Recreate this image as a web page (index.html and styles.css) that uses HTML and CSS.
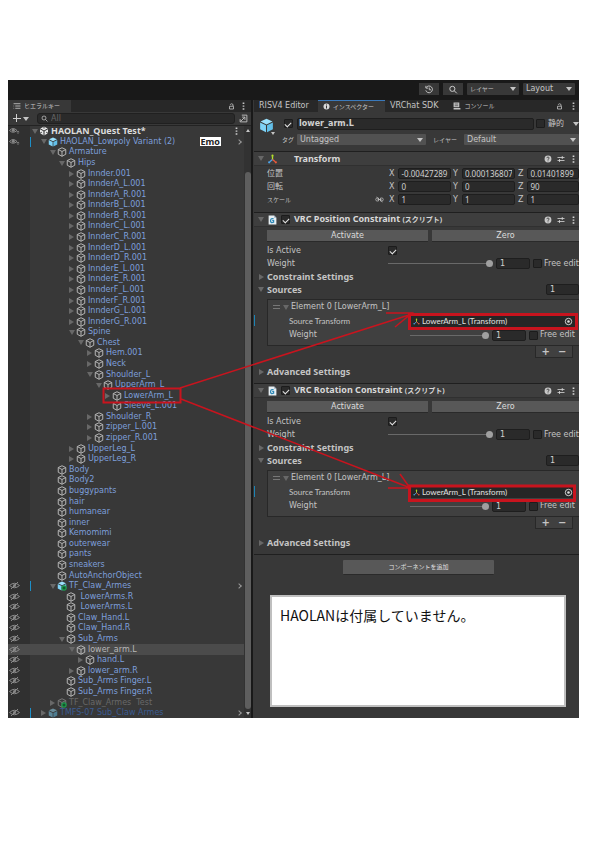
FILE: index.html
```html
<!DOCTYPE html>
<html lang="ja">
<head>
<meta charset="utf-8">
<title>HAOLAN_Quest Test</title>
<link rel="stylesheet" href="styles.css">
</head>
<body>
<svg class="defs" aria-hidden="true">
  <symbol id="cube" viewBox="0 0 20 20"><path d="M10 1.500 17.500 5v9.500L10 18.500 2.500 14.500V5ZM2.500 5 10 9l7.500-4M10 9v9.500" fill="none" stroke="currentColor" stroke-width="2" stroke-linejoin="round"/></symbol>
  <symbol id="prefab" viewBox="0 0 20 20"><path d="M10 1 18 4.500 10 8.500 2 4.500Z" fill="#9be0fb"/><path d="M1.500 6 9.300 9.800V19L1.500 15Z" fill="#7fd3f7"/><path d="M18.500 6 10.700 9.800V19l7.800-4Z" fill="#62bfe8"/></symbol>
  <symbol id="plus-badge" viewBox="0 0 10 10"><circle cx="5" cy="5" r="4.500" fill="#1e9a4c"/><path d="M5 2.500v5M2.500 5h5" stroke="#0e3d20" stroke-width="1.500"/></symbol>
  <symbol id="unity" viewBox="0 0 20 20"><path d="M10 1 18 5.500v9L10 19l-8-4.500v-9Z" fill="#e8e8e8"/><path d="M10 10V19M10 10 2 5.500M10 10l8-4.500" stroke="#333" stroke-width="2"/><path d="M10 1v4M2 14.500 5.500 12.500M18 14.500 14.500 12.500" stroke="#333" stroke-width="2"/></symbol>
  <symbol id="eye" viewBox="0 0 22 16"><path d="M1 8Q8 0 16 8 8 15 1 8Z" fill="none" stroke="currentColor" stroke-width="2"/><circle cx="8.500" cy="7.500" r="3" fill="currentColor"/><path d="M18 9v6M15.500 11l2.500-2 2.500 2" fill="none" stroke="currentColor" stroke-width="1.500"/></symbol>
  <symbol id="eye-off" viewBox="0 0 22 16"><path d="M1 8Q11-1 21 8 11 17 1 8Z" fill="none" stroke="currentColor" stroke-width="2"/><circle cx="11" cy="8" r="3" fill="currentColor"/><path d="M4 15 18 1" stroke="currentColor" stroke-width="2"/></symbol>
  <symbol id="lock" viewBox="0 0 12 14"><path d="M2 6.500h8V12H2ZM3.500 3.500Q4 1.500 6 1.500 9 1.500 9 4v2" fill="none" stroke="currentColor" stroke-width="1.600"/></symbol>
  <symbol id="kebab" viewBox="0 0 4 14"><path d="M.5 1h3v2.500h-3ZM.5 6h3v2.500h-3ZM.5 11h3v2.500h-3Z" fill="currentColor"/></symbol>
  <symbol id="search" viewBox="0 0 14 14"><circle cx="6" cy="6" r="4" fill="none" stroke="currentColor" stroke-width="1.500"/><path d="m9 9 4 4" stroke="currentColor" stroke-width="1.500"/></symbol>
  <symbol id="history" viewBox="0 0 16 16"><path d="M3 4.500A6 6 0 1 1 2.300 9.500M2.500 1.500v4h4M8.500 4.500V8.500H11.500" fill="none" stroke="currentColor" stroke-width="1.600"/></symbol>
  <symbol id="popout" viewBox="0 0 16 16"><path d="M5 2h9v12H2V9" fill="none" stroke="currentColor" stroke-width="1.600"/><path d="M3 13 10 6M5.500 5.500H10.500V10.500" fill="none" stroke="currentColor" stroke-width="1.600"/></symbol>
  <symbol id="list" viewBox="0 0 14 12"><path d="M1 2h12M4 6h9M4 10h9M1 6h1M1 10h1" stroke="currentColor" stroke-width="1.500"/></symbol>
  <symbol id="console" viewBox="0 0 14 14"><path d="M1 1h10v8H1Z M1 10.500h12V13H1Z" fill="currentColor"/><path d="M3 3.500h6M3 6.500h6" stroke="#282828"/></symbol>
  <symbol id="info" viewBox="0 0 14 14"><circle cx="7" cy="7" r="6" fill="#d8d8d8"/><path d="M7 3v2M7 6v5" stroke="#333" stroke-width="2"/></symbol>
  <symbol id="help" viewBox="0 0 14 14"><circle cx="7" cy="7" r="6" fill="#c8c8c8"/><path d="M5 5.500Q5 3.500 7 3.500T9 5.500Q9 6.500 7 7.500V8.500M7 9.500v1.500" fill="none" stroke="#333" stroke-width="1.400"/></symbol>
  <symbol id="preset" viewBox="0 0 16 14"><path d="M1 4h14M1 10h14M10.500 1v6M5 7v6" stroke="currentColor" stroke-width="1.600"/></symbol>
  <symbol id="axes" viewBox="0 0 18 18"><path d="M9 10V4" stroke="#b5e32c" stroke-width="2.400"/><path d="m9 10-5 4" stroke="#4da3e8" stroke-width="2.400"/><path d="m9 10 5 4" stroke="#f05a3c" stroke-width="2.400"/><circle cx="9" cy="3" r="2" fill="#b5e32c"/><circle cx="3" cy="15" r="2" fill="#4da3e8"/><circle cx="15" cy="15" r="2" fill="#f05a3c"/></symbol>
  <symbol id="script" viewBox="0 0 16 18"><path d="M1 1h10l4 4v12H1Z" fill="#e6eef2"/><path d="M10 7Q5 5 4.500 10T10 13V10H7.500" fill="none" stroke="#2a86b5" stroke-width="2.200"/><path d="M11 1v4h4" fill="#9ab"/></symbol>
  <symbol id="link" viewBox="0 0 18 12"><path d="M7 3H4Q1.500 3 1.500 6T4 9h3ZM11 3h3q2.500 0 2.500 3T14 9h-3ZM5 6h8M3 1l12 10" fill="none" stroke="currentColor" stroke-width="1.400"/></symbol>
  <symbol id="target" viewBox="0 0 14 14"><circle cx="7" cy="7" r="5" fill="none" stroke="currentColor" stroke-width="1.400"/><circle cx="7" cy="7" r="2" fill="currentColor"/></symbol>
</svg>

<main class="app">
  <header class="topbar">
    <button class="tool" aria-label="履歴"><svg><use href="#history"/></svg></button>
    <button class="tool" aria-label="検索"><svg><use href="#search"/></svg></button>
    <span class="drop drop-top"><select class="jp" aria-label="レイヤー"><option>レイヤー</option></select></span>
    <span class="drop drop-top"><select aria-label="Layout"><option>Layout</option></select></span>
  </header>

  <section class="hierarchy">
    <div class="tabs">
      <button class="tab active jp"><svg class="i8"><use href="#list"/></svg>ヒエラルキー</button>
      <span class="tab-end"><svg class="i7"><use href="#lock"/></svg><svg class="dots"><use href="#kebab"/></svg></span>
    </div>
    <div class="tree-tools">
      <button class="add" aria-label="追加"><span class="caret"></span></button>
      <label class="find"><svg class="i7"><use href="#search"/></svg><input type="text" placeholder="All" aria-label="All"></label>
      <button class="plain" aria-label="開く"><svg class="i9"><use href="#popout"/></svg></button>
    </div>
    <div class="tree-wrap">
      <div class="tree" id="tree"></div>
      <div class="scroll"><span class="caret up"></span><span class="thumb"></span><span class="caret down"></span></div>
    </div>
  </section>

  <section class="inspector">
    <div class="tabs">
      <button class="tab">RISV4 Editor</button>
      <button class="tab active lit jp"><svg class="i7"><use href="#info"/></svg>インスペクター</button>
      <button class="tab">VRChat SDK</button>
      <button class="tab jp"><svg class="i8"><use href="#console"/></svg>コンソール</button>
      <span class="tab-end"><svg class="i7"><use href="#lock"/></svg><svg class="dots"><use href="#kebab"/></svg></span>
    </div>

    <div class="object">
      <div class="object-icon"><svg class="big"><use href="#prefab"/></svg><span class="caret"></span></div>
      <div class="object-fields">
        <div class="line">
          <span class="lead"><input type="checkbox" checked aria-label="lower_arm.L"></span>
          <input class="field name" type="text" value="lower_arm.L" aria-label="名前">
          <input type="checkbox" id="static"><label class="static" for="static">静的</label><span class="caret end"></span>
        </div>
        <div class="line">
          <label class="lead jp" for="tag">タグ</label>
          <span class="drop tag"><select id="tag"><option>Untagged</option></select></span>
          <label class="layer jp" for="layer">レイヤー</label>
          <span class="drop grow"><select id="layer"><option>Default</option></select></span>
        </div>
      </div>
    </div>

    <section class="comp">
      <h2><span class="fold open"></span><svg class="i11"><use href="#axes"/></svg><span class="title solo">Transform</span><span class="actions"><svg class="i8"><use href="#help"/></svg><svg class="i8"><use href="#preset"/></svg><svg class="dots"><use href="#kebab"/></svg></span></h2>
      <div class="vectors">
        <div class="vec"><span>位置</span><label>X<input class="field" value="-0.00427289"></label><label>Y<input class="field" value="0.000136807"></label><label>Z<input class="field" value="0.01401899"></label></div>
        <div class="vec"><span>回転</span><label>X<input class="field" value="0"></label><label>Y<input class="field" value="0"></label><label>Z<input class="field" value="90"></label></div>
        <div class="vec"><span class="jp scale">スケール<svg class="i9"><use href="#link"/></svg></span><label>X<input class="field" value="1"></label><label>Y<input class="field" value="1"></label><label>Z<input class="field" value="1"></label></div>
      </div>
    </section>

    <section class="comp">
      <h2><span class="fold open"></span><svg class="i11"><use href="#script"/></svg><input type="checkbox" checked aria-label="VRC Position Constraint"><span class="title">VRC Position Constraint <span class="kana">(スクリプト)</span></span><span class="actions"><svg class="i8"><use href="#help"/></svg><svg class="i8"><use href="#preset"/></svg><svg class="dots"><use href="#kebab"/></svg></span></h2>
      <div class="body">
        <div class="pair"><button>Activate</button><button>Zero</button></div>
        <div class="prop"><label for="pa">Is Active</label><input type="checkbox" id="pa" checked></div>
        <div class="prop"><label for="pw">Weight</label><input type="range" id="pw" value="100"><input class="field num" value="1" aria-label="Weight"><input type="checkbox" id="pf"><label class="free" for="pf">Free edit</label></div>
        <h3><span class="fold"></span>Constraint Settings</h3>
        <h3><span class="fold open"></span>Sources<input class="field count" value="1" aria-label="Sources"></h3>
        <div class="list">
          <div class="prop"><span class="grip"></span><span class="fold open"></span>Element 0 [LowerArm_L]</div>
          <div class="prop in edited"><span class="label">Source Transform</span><button class="object-field"><svg class="i7"><use href="#axes"/></svg>LowerArm_L (Transform)<svg class="i9 pick"><use href="#target"/></svg></button></div>
          <div class="prop in"><label for="pw2">Weight</label><input type="range" id="pw2" value="100"><input class="field num" value="1" aria-label="Weight"><input type="checkbox" id="pf2"><label class="free" for="pf2">Free edit</label></div>
        </div>
        <div class="list-foot"><button>+</button><button>−</button></div>
        <h3><span class="fold"></span>Advanced Settings</h3>
      </div>
    </section>

    <section class="comp">
      <h2><span class="fold open"></span><svg class="i11"><use href="#script"/></svg><input type="checkbox" checked aria-label="VRC Rotation Constraint"><span class="title">VRC Rotation Constraint <span class="kana">(スクリプト)</span></span><span class="actions"><svg class="i8"><use href="#help"/></svg><svg class="i8"><use href="#preset"/></svg><svg class="dots"><use href="#kebab"/></svg></span></h2>
      <div class="body">
        <div class="pair"><button>Activate</button><button>Zero</button></div>
        <div class="prop"><label for="ra">Is Active</label><input type="checkbox" id="ra" checked></div>
        <div class="prop"><label for="rw">Weight</label><input type="range" id="rw" value="100"><input class="field num" value="1" aria-label="Weight"><input type="checkbox" id="rf"><label class="free" for="rf">Free edit</label></div>
        <h3><span class="fold"></span>Constraint Settings</h3>
        <h3><span class="fold open"></span>Sources<input class="field count" value="1" aria-label="Sources"></h3>
        <div class="list">
          <div class="prop"><span class="grip"></span><span class="fold open"></span>Element 0 [LowerArm_L]</div>
          <div class="prop in edited"><span class="label">Source Transform</span><button class="object-field"><svg class="i7"><use href="#axes"/></svg>LowerArm_L (Transform)<svg class="i9 pick"><use href="#target"/></svg></button></div>
          <div class="prop in"><label for="rw2">Weight</label><input type="range" id="rw2" value="100"><input class="field num" value="1" aria-label="Weight"><input type="checkbox" id="rf2"><label class="free" for="rf2">Free edit</label></div>
        </div>
        <div class="list-foot"><button>+</button><button>−</button></div>
        <h3><span class="fold"></span>Advanced Settings</h3>
      </div>
    </section>

    <div class="add-comp"><button class="jp">コンポーネントを追加</button></div>
    <p class="note">HAOLANは付属していません。</p>
  </section>

  <svg class="marks" viewBox="0 0 571 638" aria-hidden="true">
    <g fill="none" stroke="#c8141e" stroke-width="2">
      <path d="M95.500 308.500H172.500V322.500H95.500Z"/>
      <path d="M401.500 234.500H568.500V248.500H401.500Z" stroke-width="3"/>
      <path d="M401.500 406H566.500V420.500H401.500Z" stroke-width="3"/>
      <path d="M172 308 401 235M378 233l26 0-17 14" stroke-width="1.500"/>
      <path d="M173 319 400 407M392 394l10 14-22 0" stroke-width="1.500"/>
    </g>
  </svg>
</main>
<script src="app.js"></script>
</body>
</html>
```

FILE: styles.css
```css
* { box-sizing: border-box; }
body { margin: 0; background: #fff; }
body, button, input, select {
  font-family: "DejaVu Sans", "Noto Sans CJK JP", sans-serif;
  font-size: 8px;
  line-height: 10px;
  color: #c4c4c4;
}
button, input, select { margin: 0; padding: 0; border: 0; background: none; border-radius: 0; min-width: 0; }
svg { flex: none; display: block; }
.defs { position: absolute; width: 0; height: 0; }
.jp { font-size: 6px; }
.i7 { width: 7px; height: 7px; }
.i8 { width: 8px; height: 8px; }
.i9 { width: 9px; height: 9px; }
.i11 { width: 11px; height: 10px; }
.dots { width: 3px; height: 8px; }

.app {
  position: relative;
  margin: 80px 16px 0 8px;
  min-height: 638px;
  display: grid;
  grid-template-columns: 245px minmax(0, 1fr);
  grid-template-rows: 20px minmax(0, 1fr);
  background: #383838;
  color: #c4c4c4;
  overflow: hidden;
}
.marks { position: absolute; left: 0; top: 0; width: 571px; height: 638px; pointer-events: none; }

.topbar {
  grid-column: 1 / -1;
  display: flex;
  justify-content: flex-end;
  align-items: center;
  gap: 4px;
  padding: 0 4px 2px 0;
  background: #191919;
}
.tool { display: grid; place-items: center; width: 20px; height: 12px; background: #383838; color: #d0d0d0; }
.tool svg { width: 10px; height: 9px; }

.drop { position: relative; display: flex; background: #515151; border-radius: 1px; }
.drop select { appearance: none; width: 100%; height: 11px; padding: 0 10px 0 3px; }
.drop::after, .caret {
  content: "";
  border: 3px solid transparent;
  border-top: 4px solid #c4c4c4;
  border-bottom: 0;
  flex: none;
}
.drop::after { position: absolute; right: 3px; top: 4px; pointer-events: none; }
.drop-top { width: 52px; background: #383838; }
.drop-top select { height: 12px; }
.grow { flex: 1; }

.tabs { display: flex; height: 12px; background: #282828; }
.tab { display: flex; align-items: center; gap: 3px; padding: 0 5px; white-space: nowrap; }
.tab.active { background: #383838; }
.tab-end { margin-left: auto; display: flex; align-items: center; gap: 7px; padding-right: 4px; }

.hierarchy { display: flex; flex-direction: column; border-right: 2px solid #191919; }
.hierarchy .tab { padding-right: 11px; }
.hierarchy .tab-end { padding-right: 6px; }
.tree-tools { display: flex; align-items: center; height: 14px; padding: 0 3px 0 4px; gap: 4px; border-bottom: 1px solid #232323; }
.add { position: relative; display: flex; align-items: center; justify-content: flex-end; width: 17px; height: 11px; margin-right: 4px; }
.add::before, .add::after { content: ""; position: absolute; background: #d0d0d0; }
.add::before { left: 1px; top: 5px; width: 8px; height: 1px; }
.add::after { left: 4px; top: 1px; width: 1px; height: 8px; }
.find { flex: 1; display: flex; align-items: center; gap: 3px; height: 11px; padding: 0 3px; background: #2a2a2a; border: 1px solid #202020; border-radius: 3px; }
.find input { width: 100%; height: 9px; }
.find input::placeholder { color: #666; }

.tree-wrap { flex: 1; display: flex; }
.tree { flex: 1; display: flex; flex-direction: column; background: linear-gradient(90deg, #303030 22px, #383838 22px); }
.row { flex: 1; min-height: 10px; display: flex; align-items: center; white-space: pre; color: #7d9fdb; }
.row.scene { color: #dcdcdc; }
.row.scene, .emo, h2, h3 { font-family: "Noto Sans", "Noto Sans CJK JP", sans-serif; font-size: 9px; font-weight: bold; }
.row.selected { background: #4b4b4b; color: #b8b8b8; }
.row.off { color: #686868; }
.row.dim { color: #3c5c92; }
.gutter { width: 23px; height: 10px; margin-right: -1px; flex: none; padding-left: 1px; color: #8a8a8a; }
.gutter svg { width: 11px; height: 9px; }
.row.changed .gutter { border-right: 1px solid #1d8fc8; }
.indent { flex: none; }
.d1 { width: 9px; } .d2 { width: 18px; } .d3 { width: 27px; } .d4 { width: 37px; }
.d5 { width: 46px; } .d6 { width: 55px; } .d7 { width: 64px; } .d8 { width: 73px; }
.fold { width: 6px; flex: none; display: flex; justify-content: center; }
.fold::before { content: ""; border: 3px solid transparent; border-left: 5px solid #686868; border-right: 0; }
.fold.open::before { border: 3px solid transparent; border-top: 5px solid #686868; border-bottom: 0; }
.row .fold { width: 9px; }
.row .fold.none::before { border-color: transparent; }
.cube { position: relative; flex: none; margin-right: 2px; color: #b4b4b4; }
.cube > svg { width: 10px; height: 10px; }
.cube .badge { position: absolute; right: 0; bottom: 0; width: 6px; height: 6px; }
.off .cube { color: #777; }
.dim .cube { opacity: .5; }
.emo { margin-left: auto; padding: 0 1px; line-height: 9px; background: #fff; color: #222; }
.more { margin-left: auto; padding-right: 3px; color: #999; }
.emo + .more { margin-left: 16px; }
.more .dots { margin-right: 3px; color: #ccc; }
.more i { display: block; width: 4px; height: 4px; border: solid #999; border-width: 1px 1px 0 0; transform: rotate(45deg); }
.scroll { width: 7px; display: flex; flex-direction: column; align-items: center; gap: 3px; padding: 3px 0; background: #323232; }
.scroll .thumb { flex: 1; width: 6px; margin-top: 37px; border-radius: 3px; background: #5e5e5e; }
.caret.up { border: 2px solid transparent; border-bottom: 3px solid #c4c4c4; border-top: 0; }
.caret.down { border-width: 3px 2px 0; }

.inspector { display: flex; flex-direction: column; overflow: hidden; margin-left: 1px; }
.inspector .lit { margin-left: 4px; padding-right: 11px; border-top: 1px solid #3a79bb; }
.inspector .tab-end { padding-right: 4px; gap: 9px; }
.inspector .tab:nth-child(4) { margin-left: 5px; }
.object { display: flex; padding: 5px 0 0 5px; height: 39px; gap: 6px; }
.object-icon { position: relative; width: 16px; }
.big { width: 15px; height: 17px; }
.object-icon .caret { position: absolute; right: 0; bottom: 16px; border-width: 3px 2px 0; }
.object-fields { flex: 1; min-width: 0; display: flex; flex-direction: column; gap: 3px; }
.line { display: flex; align-items: center; gap: 2px; height: 13px; }
.lead { width: 14px; flex: none; display: flex; justify-content: center; }
.tag { width: 129px; }
.layer { width: 34px; text-align: center; }
.static { width: 24px; padding-left: 1px; }
.field { height: 11px; padding: 0 3px; background: #2a2a2a; border: 1px solid #1e1e1e; border-radius: 2px; color: #d0d0d0; }
.name { flex: 1; height: 12px; padding: 0 1px; font-weight: bold; }
input[type="checkbox"] { appearance: none; flex: none; display: grid; place-items: center; width: 9px; height: 9px; background: #2a2a2a; border: 1px solid #1c1c1c; border-radius: 1px; }
input[type="checkbox"]:checked::before { content: ""; width: 5px; height: 3px; border: solid #e4e4e4; border-width: 0 0 1px 1px; transform: rotate(-45deg); }

.comp { border-top: 1px solid #1f1f1f; }
h2, h3 { margin: 0; line-height: 10px; display: flex; align-items: center; }
h2 { height: 14px; padding: 0 4px; gap: 3px; background: #3e3e3e; color: #d8d8d8; border-bottom: 1px solid #303030; }
.title { margin-left: 1px; }
.title.solo { margin-left: 13px; }
.kana { font-size: 7px; }
.actions { margin-left: auto; display: flex; align-items: center; gap: 5px; }
.actions .dots { margin-left: 2px; }
.vectors { padding: 1px 0 6px 13px; }
.vec { display: grid; grid-template-columns: 122px 64px 65px 61px; height: 13px; align-items: center; }
.vec label { display: flex; align-items: center; gap: 4px; }
.vec input { width: 53px; padding: 0 2px; font-family: "Noto Sans", sans-serif; }
.scale { display: flex; justify-content: space-between; padding-right: 5px; }

.body { padding: 3px 0 5px 13px; }
.pair { display: grid; grid-template-columns: 161px 1fr; gap: 4px; margin-bottom: 2px; }
.pair button { height: 12px; background: #585858; color: #dcdcdc; border-bottom: 1px solid #2a2a2a; }
.prop, h3 { height: 13px; }
.prop { display: flex; align-items: center; white-space: nowrap; }
.prop > label:first-child, .label { width: 121px; flex: none; }
h3 { margin-left: -9px; gap: 3px; }
.count { width: 33px; margin-left: auto; }
input[type="range"] { appearance: none; flex: 1; height: 8px; margin-right: 3px; }
input[type="range"]::-webkit-slider-runnable-track { height: 1px; background: #696969; }
input[type="range"]::-webkit-slider-thumb { appearance: none; width: 7px; height: 7px; margin-top: -3px; border-radius: 50%; background: #a0a0a0; }
.num { width: 34px; margin-right: 3px; }
.free { margin-left: 2px; width: 35px; }
.list { margin-top: 3px; padding: 0 4px 3px 5px; background: #404040; border: 1px solid #282828; border-right: 0; }
.list .prop { height: 14px; }
.list .in { position: relative; padding-left: 16px; }
.list .edited::before { content: ""; position: absolute; left: -19px; top: 1px; width: 1px; height: 11px; background: #1d84b5; }
.list .fold { margin-right: 2px; }
.grip { width: 7px; height: 4px; margin-right: 3px; border: solid #777; border-width: 1px 0; }
.object-field { flex: 1; display: flex; align-items: center; gap: 2px; height: 11px; padding-left: 3px; background: #262626; color: #e0e0e0; }
.label, .object-field { font-family: Lato, sans-serif; }
.pick { margin-left: auto; margin-right: 2px; }
.list-foot { display: flex; justify-content: center; gap: 8px; width: 38px; height: 12px; margin: 0 6px 7px auto; background: #404040; border: 1px solid #282828; border-top: 0; }
.list-foot button { font-size: 10px; font-weight: bold; }

.add-comp { display: flex; justify-content: center; border-top: 1px solid #1f1f1f; padding: 5px 0 0 4px; }
.add-comp button { width: 151px; height: 15px; background: #585858; color: #e0e0e0; border-bottom: 1px solid #2a2a2a; border-radius: 1px; }
.note { flex: 1; margin: 20px 13px 11px 16px; padding: 8px; background: #fff; border: 2px solid #bfbfbf; color: #111; font-family: "Noto Sans CJK JP", sans-serif; font-size: 14px; line-height: 20px; }
```

FILE: app.js
```js
// Each entry: depth, fold state (v open, > closed, - leaf), name, options.
const rows = [
  [0, "v", "HAOLAN_Quest Test*", { cls: "scene", icon: "unity", eye: "eye", kebab: 1 }],
  [1, "v", "HAOLAN_Lowpoly Variant (2)", { cls: "changed", icon: "prefab", eye: "eye", emo: 1, more: 1 }],
  [2, "v", "Armature"], [3, "v", "Hips"],
  ...["", "A_L", "A_R", "B_L", "B_R", "C_L", "C_R", "D_L", "D_R", "E_L", "E_R", "F_L", "F_R", "G_L", "G_R"]
    .map(s => [4, ">", "Innder" + s + ".001"]),
  [4, "v", "Spine"], [5, "v", "Chest"], [6, ">", "Hem.001"], [6, ">", "Neck"],
  [6, "v", "Shoulder_L"], [7, "v", "UpperArm_L"], [8, ">", "LowerArm_L"], [8, "-", "Sleeve_L.001"],
  [6, ">", "Shoulder_R"], [6, ">", "zipper_L.001"], [6, ">", "zipper_R.001"],
  [4, ">", "UpperLeg_L"], [4, ">", "UpperLeg_R"],
  ...["Body", "Body2", "buggypants", "hair", "humanear", "inner", "Kemomimi", "outerwear", "pants", "sneakers", "AutoAnchorObject"]
    .map(s => [2, "-", s]),
  [2, "v", "TF_Claw_Armes", { cls: "changed", icon: "prefab", badge: 1, eye: "eye-off", more: 1 }],
  [3, "-", " LowerArms.R", { eye: "eye-off" }], [3, "-", " LowerArms.L", { eye: "eye-off" }],
  [3, "-", "Claw_Hand.L", { eye: "eye-off" }], [3, "-", "Claw_Hand.R", { eye: "eye-off" }],
  [3, "v", "Sub_Arms", { eye: "eye-off" }],
  [4, "v", "lower_arm.L", { cls: "selected", eye: "eye-off" }],
  [5, ">", "hand.L", { eye: "eye-off" }], [4, ">", "lower_arm.R", { eye: "eye-off" }],
  [3, "-", "Sub_Arms Finger.L", { eye: "eye-off" }], [3, "-", "Sub_Arms Finger.R", { eye: "eye-off" }],
  [2, ">", "TF_Claw_Armes  Test", { cls: "off", badge: 1 }],
  [1, ">", "TMFS-07 Sub_Claw Armes", { cls: "changed dim", icon: "prefab", eye: "eye-off", more: 1 }]
];
const use = (id, cls = "") => `<svg class="${cls}"><use href="#${id}"/></svg>`;
const foldClass = { v: "open", ">": "", "-": "none" };
document.getElementById("tree").innerHTML = rows.map(([depth, fold, name, o = {}]) =>
  `<div class="row ${o.cls || ""}"><span class="gutter">${o.eye ? use(o.eye) : ""}</span>` +
  `<span class="indent d${depth}"></span><span class="fold ${foldClass[fold]}"></span>` +
  `<span class="cube">${use(o.icon || "cube")}${o.badge ? use("plus-badge", "badge") : ""}</span><span>${name}</span>` +
  (o.emo ? `<span class="emo">Emo</span>` : "") +
  (o.more ? `<span class="more"><i></i></span>` : "") +
  (o.kebab ? `<span class="more">${use("kebab", "dots")}</span>` : "") + `</div>`).join("");
```
